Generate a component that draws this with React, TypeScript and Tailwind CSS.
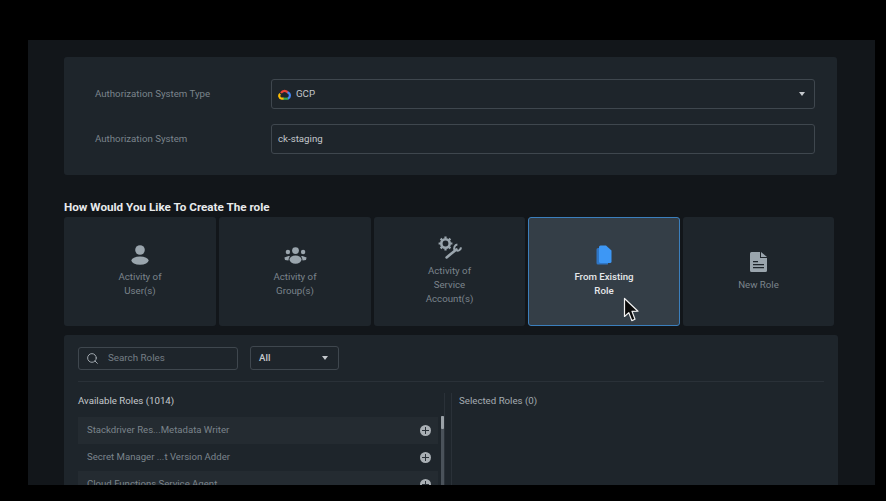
import React from "react"
import { Search } from "lucide-react"

function Caret() {
    return <span className="w-0 h-0 border-x-[3px] border-x-transparent border-t-[4px] border-t-[#c4c8cc]" />
}

function GcpLogo() {
    return (
        <svg width="13" height="11" viewBox="0 0 26 22" fill="none" strokeWidth="4.4" strokeLinecap="butt">
            <path d="M6 8 A8.4 8.4 0 0 1 20.4 8" stroke="#ea4335" />
            <path d="M19 6.5 A7 7 0 0 1 19.5 19.6" stroke="#4285f4" />
            <path d="M20 19.4 H10" stroke="#34a853" />
            <path d="M11 19.4 H7.5 A5.6 5.6 0 0 1 4.4 9.6" stroke="#fbbc05" />
        </svg>
    )
}

function UserIcon() {
    return (
        <svg width="18" height="20" viewBox="0 0 18 20" fill="#9aa5ad">
            <circle cx="9" cy="5" r="4.8" />
            <ellipse cx="9" cy="15.6" rx="8.6" ry="4.2" />
        </svg>
    )
}

function GroupIcon() {
    return (
        <svg width="23" height="17" viewBox="0 0 23 17" fill="#9aa5ad">
            <circle cx="11.5" cy="3.6" r="3.4" />
            <circle cx="3.9" cy="5" r="2.2" />
            <circle cx="19.1" cy="5" r="2.2" />
            <ellipse cx="11.5" cy="12.6" rx="6" ry="4.2" />
            <path d="M4.6 9 L0.4 10.6 L1 13 L4.4 13.6 Q4.4 11 6 9.2 Z" />
            <path d="M18.4 9 L22.6 10.6 L22 13 L18.6 13.6 Q18.6 11 17 9.2 Z" />
        </svg>
    )
}

function ToolsIcon() {
    return (
        <svg width="24" height="24" viewBox="0 0 24 24" fill="none" stroke="#9aa5ad">
            <circle cx="7.5" cy="7.5" r="4.2" strokeWidth="2.6" />
            <path d="M7.5 0.6v2M7.5 12.4v2M0.6 7.5h2M12.4 7.5h2M2.6 2.6l1.4 1.4M11 11l1.4 1.4M2.6 12.4l1.4-1.4M11 4l1.4-1.4" strokeWidth="2.2" />
            <path d="M8.6 21.4 L18.4 13.4" strokeWidth="2.6" strokeLinecap="round" />
            <path d="M16.8 14.2 A3.6 3.6 0 0 1 19.4 8.6 M23 11.4 A3.6 3.6 0 0 1 18.6 14.6" strokeWidth="2" />
        </svg>
    )
}

function CopyIcon() {
    return (
        <svg width="16" height="20" viewBox="0 0 16 20">
            <path d="M2 3 H3 V17 H12 V19 Q12 19.5 11 19.5 H2 Q0.5 19.5 0.5 18 V4.5 Q0.5 3 2 3 Z" fill="#2f75c4" />
            <path d="M4.5 0.5 H10 L15.5 5.5 V16.5 Q15.5 18 14 18 H4.5 Q3 18 3 16.5 V2 Q3 0.5 4.5 0.5 Z" fill="#3d97f5" />
        </svg>
    )
}

function FileIcon() {
    return (
        <svg width="17" height="20" viewBox="0 0 17 20">
            <path d="M1.5 0 H10 V6 H17 V18.5 Q17 20 15.5 20 H1.5 Q0 20 0 18.5 V1.5 Q0 0 1.5 0 Z" fill="#9aa5ad" />
            <path d="M11 0 L17 5 H11 Z" fill="#9aa5ad" />
            <path d="M3 9.6 H8 M3 12.6 H14 M3 15.6 H14" stroke="#1e252b" strokeWidth="1.3" />
        </svg>
    )
}

function PlusDot() {
    return (
        <span className="w-[11px] h-[11px] rounded-full bg-[#a9afb4] flex items-center justify-center relative shrink-0">
            <span className="absolute w-[7px] h-[1.5px] bg-[#2a3138]" />
            <span className="absolute w-[1.5px] h-[7px] bg-[#2a3138]" />
        </span>
    )
}

function Tile({ icon, lines, active, w, gap }: { icon: React.ReactNode; lines: string[]; active?: boolean; w: string; gap: string }) {
    return (
        <div
            className={
                active
                    ? `${w} h-[109px] shrink-0 rounded-[3px] bg-[#343e47] border border-[#3b7fbd] pb-[2px] flex flex-col items-center justify-center`
                    : `${w} h-[109px] shrink-0 rounded-[3px] bg-[#1e252b] pb-[2px] flex flex-col items-center justify-center`
            }
        >
            <div className={`h-6 flex items-center justify-center ${gap}`}>{icon}</div>
            {lines.map((l) => (
                <div
                    key={l}
                    className={
                        active
                            ? "text-[9.7px] leading-[14px] font-medium text-[#e6e8ea]"
                            : "text-[9.7px] leading-[14px] text-[#7b848b]"
                    }
                >
                    {l}
                </div>
            ))}
        </div>
    )
}

function RoleRow({ name, dark }: { name: string; dark?: boolean }) {
    return (
        <div
            className={
                dark
                    ? "h-[27px] shrink-0 flex items-center justify-between pl-[9px] pr-[7px] bg-[#1e252b]"
                    : "h-[27px] shrink-0 flex items-center justify-between pl-[9px] pr-[7px] bg-[#242b31]"
            }
        >
            <span className="text-[9.6px] text-[#7b848b]">{name}</span>
            <PlusDot />
        </div>
    )
}

export default function App() {
    return (
        <div className="w-[886px] h-[501px] bg-black overflow-hidden pt-10 pl-7 font-['Roboto',sans-serif]">
            <div className="w-[847px] h-[445px] bg-[#12161a] overflow-hidden pt-[17px] pl-9 relative">
                {/* top form */}
                <div className="w-[773px] h-[118px] bg-[#1e252b] rounded-[3px] pt-[22px] pl-[31px]">
                    <div className="flex items-center h-[30px] mb-[15px]">
                        <span className="w-[176px] text-[9.7px] text-[#7b848b]">Authorization System Type</span>
                        <div className="w-[544px] h-[30px] rounded-[3px] border border-[#3f474e] flex items-center pl-[6px] pr-[9px]">
                            <GcpLogo />
                            <span className="ml-[5px] text-[9.7px] text-[#c4c8cc]">GCP</span>
                            <span className="ml-auto flex">
                                <Caret />
                            </span>
                        </div>
                    </div>
                    <div className="flex items-center h-[30px]">
                        <span className="w-[176px] text-[9.7px] text-[#7b848b]">Authorization System</span>
                        <div className="w-[544px] h-[30px] rounded-[3px] border border-[#3f474e] flex items-center pl-[6px]">
                            <span className="text-[9.7px] text-[#c4c8cc]">ck-staging</span>
                        </div>
                    </div>
                </div>

                <h2 className="mt-[23px] h-[19px] leading-[18px] text-[11.7px] font-bold text-[#e8eaec]">How Would You Like To Create The role</h2>

                {/* tiles */}
                <div className="flex gap-[3px]">
                    <Tile w="w-[152px]" gap="mb-[3px]" icon={<UserIcon />} lines={["Activity of", "User(s)"]} />
                    <Tile w="w-[152px]" gap="mb-[3px]" icon={<GroupIcon />} lines={["Activity of", "Group(s)"]} />
                    <Tile w="w-[151px]" gap="mb-[4px]" icon={<ToolsIcon />} lines={["Activity of", "Service", "Account(s)"]} />
                    <Tile w="w-[152px]" gap="mb-[3px]" active icon={<CopyIcon />} lines={["From Existing", "Role"]} />
                    <Tile w="w-[151px]" gap="mb-[4px]" icon={<FileIcon />} lines={["New Role"]} />
                </div>

                {/* roles panel */}
                <div className="mt-[9px] w-[774px] h-[160px] bg-[#1e252b] rounded-t-[3px] pt-[11px] px-[14px]">
                    <div className="flex items-center gap-3 pb-[11px] border-b border-[#2a3138]">
                        <div className="w-[160px] h-[23px] rounded-[3px] border border-[#3f474e] flex items-center pl-[7px]">
                            <Search size={13} strokeWidth={1.8} className="text-[#a4abb1]" />
                            <span className="ml-[9px] text-[9.8px] text-[#757e85]">Search Roles</span>
                        </div>
                        <div className="w-[89px] h-[24px] rounded-[3px] border border-[#3f474e] flex items-center justify-between pl-2 pr-[10px]">
                            <span className="text-[9.7px] font-medium text-[#c4c8cc]">All</span>
                            <Caret />
                        </div>
                    </div>
                    <div className="flex mt-[11px]">
                        <div className="w-[366px] shrink-0">
                            <div className="h-[14px] leading-[14px] text-[9.7px] text-[#c4c8cc] mb-[10px] pt-[1px]">Available Roles (1014)</div>
                            <div className="flex flex-col w-[360px]">
                                <RoleRow name="Stackdriver Res...Metadata Writer" />
                                <RoleRow name="Secret Manager ...t Version Adder" dark />
                                <RoleRow name="Cloud Functions Service Agent" />
                            </div>
                        </div>
                        <div className="border-l border-[#2a3138] h-[120px] relative">
                            {/* scrollbar */}
                            <span className="absolute -left-[4px] top-[23px] w-[3px] h-[70px] bg-[#4a525a]" />
                            <span className="absolute -left-[4px] top-[23px] w-[3px] h-[13px] bg-[#9aa1a7] rounded-[1px]" />
                        </div>
                        <div className="ml-[6px] border-l border-[#2a3138] pl-[7px] h-[120px]">
                            <div className="h-[14px] leading-[14px] text-[9.7px] text-[#a4abb1] pt-[1px]">Selected Roles (0)</div>
                        </div>
                    </div>
                </div>

                {/* mouse pointer */}
                <svg className="absolute left-[595px] top-[257px]" width="17" height="26" viewBox="0 0 17 26">
                    <path d="M1.5 1.5 V19.5 L5.8 15.6 L8.8 23.6 L12 22.2 L9 14.4 L15 14.2 Z" fill="#0a0a0a" stroke="#f2f2f2" strokeWidth="1.2" strokeLinejoin="round" />
                </svg>
            </div>
        </div>
    )
}
